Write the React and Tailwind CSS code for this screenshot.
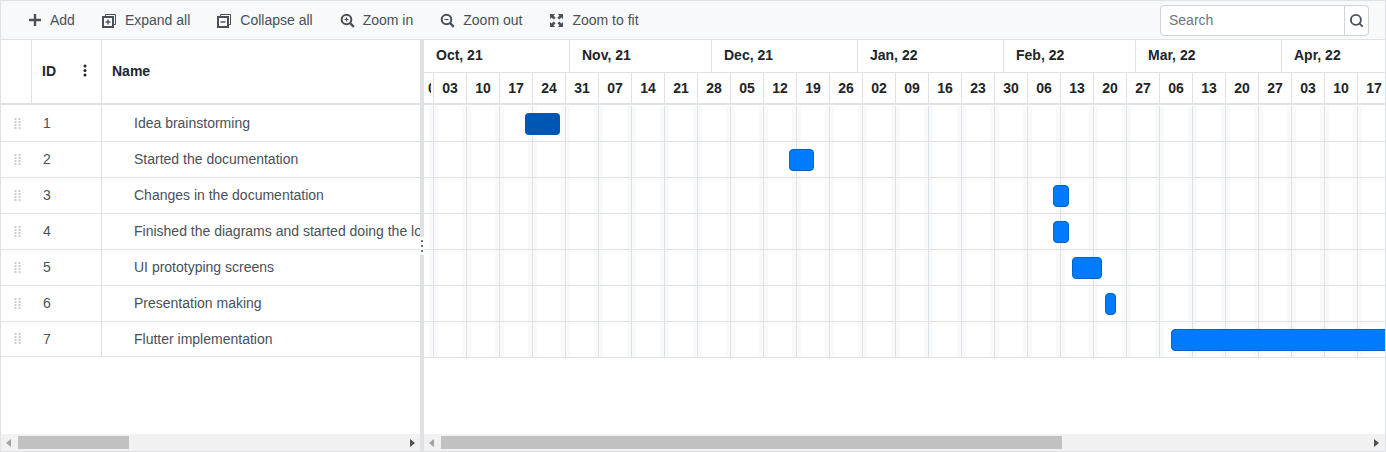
import { Search } from "lucide-react";

const months = [
    { label: "Oct, 21", cls: "w-[146px]" },
    { label: "Nov, 21", cls: "w-[142px]" },
    { label: "Dec, 21", cls: "w-[146px]" },
    { label: "Jan, 22", cls: "w-[146px]" },
    { label: "Feb, 22", cls: "w-[132px]" },
    { label: "Mar, 22", cls: "w-[146px]" },
    { label: "Apr, 22", cls: "w-[146px]" },
];

const weeks = ["03", "10", "17", "24", "31", "07", "14", "21", "28", "05", "12", "19", "26", "02", "09", "16", "23", "30", "06", "13", "20", "27", "06", "13", "20", "27", "03", "10", "17"];

const tasks = [
    { id: 1, name: "Idea brainstorming", left: 101, width: 35, active: true },
    { id: 2, name: "Started the documentation", left: 365, width: 25 },
    { id: 3, name: "Changes in the documentation", left: 629, width: 16 },
    { id: 4, name: "Finished the diagrams and started doing the logic", left: 629, width: 16 },
    { id: 5, name: "UI prototyping screens", left: 648, width: 30 },
    { id: 6, name: "Presentation making", left: 681, width: 11 },
    { id: 7, name: "Flutter implementation", left: 747, width: 230 },
];

function PlusIcon() {
    return (
        <svg width="14" height="14" viewBox="0 0 14 14" fill="none" stroke="#495057" strokeWidth="2.4">
            <path d="M7 1v12M1 7h12" />
        </svg>
    );
}

function StackIcon({ plus }) {
    return (
        <svg width="15" height="15" viewBox="0 0 15 15" fill="none" stroke="#495057">
            <path d="M3.5 3.5V1.5h10v10h-2" strokeWidth="1" />
            <rect x="1" y="4" width="10" height="10" strokeWidth="2" />
            <path d="M3.5 9h5" strokeWidth="1.4" />
            {plus && <path d="M6 6.5v5" strokeWidth="1.4" />}
        </svg>
    );
}

function ZoomIcon({ plus }) {
    return (
        <svg width="15" height="15" viewBox="0 0 15 15" fill="none" stroke="#495057">
            <circle cx="6.5" cy="6.5" r="4.8" strokeWidth="2" />
            <path d="M10 10l3.8 3.8" strokeWidth="2.4" />
            <path d="M4.5 6.5h4" strokeWidth="1.2" />
            {plus && <path d="M6.5 4.5v4" strokeWidth="1.2" />}
        </svg>
    );
}

function FitIcon() {
    return (
        <svg width="15" height="15" viewBox="0 0 15 15" fill="#495057">
            <path d="M1 1h5L4.6 2.7l2 2-1.9 1.9-2-2L1 6z" />
            <path d="M14 1v5l-1.7-1.4-2 2-1.9-1.9 2-2L9 1z" />
            <path d="M1 14V9l1.7 1.4 2-2 1.9 1.9-2 2L6 14z" />
            <path d="M14 14H9l1.4-1.7-2-2 1.9-1.9 2 2L14 9z" />
        </svg>
    );
}

function ToolItem({ icon, label, gap }) {
    return (
        <div className={`flex items-center ${gap}`}>
            {icon}
            <span>{label}</span>
        </div>
    );
}

function DragDots() {
    return (
        <svg width="8" height="12" viewBox="0 0 8 12" fill="#c9cdd1">
            {[0, 3, 6, 9].map((y) => (
                <g key={y}>
                    <rect x="0.5" y={y} width="2" height="2" />
                    <rect x="4.5" y={y} width="2" height="2" />
                </g>
            ))}
        </svg>
    );
}

function ScrollBar({ thumb, wide }) {
    return (
        <div className="h-[17px] shrink-0 flex items-center bg-[#f1f1f1]">
            <div className="w-[17px] flex items-center justify-center pr-px">
                <svg width="6" height="8" viewBox="0 0 6 8" fill="#a3a3a3">
                    <path d="M5 0v8L0 4z" />
                </svg>
            </div>
            <div className={`h-[13px] bg-[#c1c1c1] ${thumb}`}></div>
            <div className={`ml-auto w-[17px] flex items-center justify-center ${wide ? "pr-px" : "pl-px"}`}>
                <svg width="6" height="8" viewBox="0 0 6 8" fill="#505050">
                    <path d="M1 0v8l5-4z" />
                </svg>
            </div>
        </div>
    );
}

function WeekCell() {
    return (
        <div className="w-[33px] shrink-0 flex justify-between border-r border-[#dee2e6]">
            <div className="w-1 bg-[#f8f9fa]"></div>
            <div className="w-1 bg-[#f8f9fa]"></div>
        </div>
    );
}

export default function App() {
    return (
        <div className="w-[1386px] h-[452px] flex flex-col overflow-hidden bg-white border border-[#dee2e6] font-['Liberation_Sans',Arial,sans-serif] text-sm text-[#495057]">

            {/* Toolbar */}

            <div className="h-[39px] shrink-0 flex items-center pl-[27px] pr-4 gap-[27px] bg-[#f8f9fa] border-b border-[#dee2e6]">
                <ToolItem icon={<PlusIcon />} label="Add" gap="gap-[8px]" />
                <ToolItem icon={<StackIcon plus />} label="Expand all" gap="gap-2" />
                <ToolItem icon={<StackIcon />} label="Collapse all" gap="gap-2" />
                <ToolItem icon={<ZoomIcon plus />} label="Zoom in" gap="gap-2" />
                <ToolItem icon={<ZoomIcon />} label="Zoom out" gap="gap-2" />
                <ToolItem icon={<FitIcon />} label="Zoom to fit" gap="gap-2" />

                <div className="ml-auto w-[209px] h-[31px] flex bg-white border border-[#ced4da] rounded">
                    <div className="flex-1 pl-2 flex items-center text-[#6c757d]">Search</div>
                    <div className="w-6 flex items-center justify-center border-l border-[#ced4da]">
                        <Search size={15} strokeWidth={3} color="#495057" />
                    </div>
                </div>
            </div>

            <div className="flex-1 flex min-h-0">

                {/* Tree grid */}

                <div className="w-[419px] shrink-0 flex flex-col">
                    <div className="h-[65px] shrink-0 flex border-b-2 border-[#dee2e6] font-bold text-[#212529]">
                        <div className="w-[31px] border-r border-[#dee2e6]"></div>
                        <div className="w-[70px] flex items-center justify-between pl-[10px] pr-[14px] pb-[2px] border-r border-[#dee2e6]">
                            <span>ID</span>
                            <svg width="4" height="13" viewBox="0 0 4 13" fill="#212529">
                                <circle cx="2" cy="2" r="1.5" />
                                <circle cx="2" cy="6.5" r="1.5" />
                                <circle cx="2" cy="11" r="1.5" />
                            </svg>
                        </div>
                        <div className="flex-1 flex items-center pl-[10px] pb-[2px]">Name</div>
                    </div>

                    <div className="flex-1 min-h-0 pt-px">
                        {tasks.map((task) => (
                            <div key={task.id} className={`flex border-b border-[#dee2e6] ${task.id === 7 ? "h-[35px]" : "h-9"}`}>
                                <div className="w-[31px] flex items-center pl-[13px]">
                                    <DragDots />
                                </div>
                                <div className="w-[70px] flex items-center pl-[11px] pb-px border-r border-[#dee2e6]">
                                    {task.id}
                                </div>
                                <div className="flex-1 min-w-0 flex items-center pl-8 pb-px overflow-hidden whitespace-nowrap">
                                    {task.name}
                                </div>
                            </div>
                        ))}
                    </div>

                    <ScrollBar thumb="w-[111px]" />
                </div>

                {/* Splitter */}

                <div className="relative w-1 shrink-0 bg-[#dee2e6]">
                    <div className="absolute left-0 top-[197px] w-1 h-[18px] bg-white flex flex-col items-center justify-center gap-[3px]">
                        <div className="w-[2px] h-[2px] bg-[#6c757d]"></div>
                        <div className="w-[2px] h-[2px] bg-[#6c757d]"></div>
                        <div className="w-[2px] h-[2px] bg-[#6c757d]"></div>
                    </div>
                </div>

                {/* Timeline */}

                <div className="flex-1 min-w-0 flex flex-col">
                    <div className="h-[65px] shrink-0 border-b-2 border-[#dee2e6] font-bold text-[#212529] overflow-hidden">
                        <div className="h-[33px] flex border-b border-[#dee2e6]">
                            {months.map((month) => (
                                <div key={month.label} className={`${month.cls} shrink-0 flex items-center pl-3 pb-[2px] border-r border-[#dee2e6] last:border-r-0`}>
                                    {month.label}
                                </div>
                            ))}
                        </div>
                        <div className="h-[30px] flex">
                            <div className="w-[10px] shrink-0 flex items-center pl-1 border-r border-[#dee2e6]">
                                <span className="block w-[3px] overflow-hidden">0</span>
                            </div>
                            {weeks.map((week, index) => (
                                <div key={index} className="w-[33px] shrink-0 flex items-center justify-center border-r border-[#dee2e6]">
                                    {week}
                                </div>
                            ))}
                        </div>
                    </div>

                    <div className="flex-1 min-h-0 pt-px overflow-hidden">
                        {tasks.map((task) => (
                            <div key={task.id} className="relative h-9 flex border-b border-[#dee2e6]">
                                <div className="w-[10px] shrink-0 flex justify-end border-r border-[#dee2e6]">
                                    <div className="w-1 bg-[#f8f9fa]"></div>
                                </div>
                                {weeks.map((week, index) => (
                                    <WeekCell key={index} />
                                ))}
                                <div
                                    className={`absolute top-[7px] h-[22px] rounded ${task.active ? "bg-[#0056b3]" : "bg-[#007bff] border border-[#0062cc]"}`}
                                    style={{ left: task.left, width: task.width }}
                                ></div>
                            </div>
                        ))}
                    </div>

                    <ScrollBar thumb="w-[621px]" wide />
                </div>

            </div>
        </div>
    );
}
